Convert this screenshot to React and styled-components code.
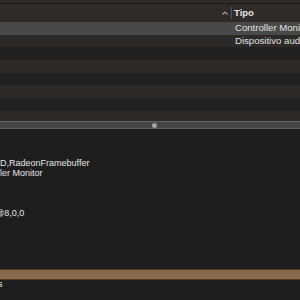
import React from "react";
import styled, { createGlobalStyle } from "styled-components";

const Global = createGlobalStyle`
  html, body { margin: 0; padding: 0; background: #1e1e1e; }
  #root { width: 300px; height: 300px; }
`;

const Window = styled.div`
  width: 300px;
  height: 300px;
  overflow: hidden;
  display: flex;
  flex-direction: column;
  background: #1e1e1e;
  font-family: "Liberation Sans", Arial, sans-serif;
  font-size: 9px;
  color: #d6d6d6;
`;

const TopStrip = styled.div`
  height: 3px;
  background: #2e2b29;
  border-bottom: 1px solid #191919;
  flex: none;
`;

const Header = styled.div`
  height: 18px;
  flex: none;
  display: grid;
  grid-template-columns: 1fr 69px;
  align-items: center;
  background: #2e2b29;
`;

const SortCell = styled.div`
  display: flex;
  justify-content: flex-end;
  align-items: center;
  padding-right: 3px;
`;

const HeaderCell = styled.div`
  position: relative;
  padding-left: 3px;
  font-weight: bold;
  font-size: 9.5px;
  color: #e4e4e4;
  line-height: 18px;
  &::before {
    content: "";
    position: absolute;
    left: 0;
    top: 3px;
    bottom: 3px;
    width: 1px;
    background: #575452;
  }
`;

const Rows = styled.div`
  height: 99px;
  flex: none;
  overflow: hidden;
`;

const Row = styled.div`
  height: 12.7px;
  display: grid;
  grid-template-columns: 1fr 65px;
  align-items: center;
  background: ${(p) => (p.$selected ? "#4a4949" : p.$alt ? "#232120" : "#2c2927")};
  white-space: nowrap;
  overflow: hidden;
`;

const Cell = styled.div`
  overflow: hidden;
  color: #e0e0e0;
  font-size: 9.6px;
  line-height: 12.7px;
`;

const Divider = styled.div`
  height: 6px;
  flex: none;
  background: #454545;
  border-top: 1px solid #626262;
  border-bottom: 1px solid #5a5a5a;
  display: flex;
  align-items: center;
  justify-content: center;
`;

const Grip = styled.div`
  width: 5px;
  height: 5px;
  border-radius: 50%;
  background: #a4a4a4;
  margin-left: 8px;
`;

const Detail = styled.div`
  flex: 1;
  background: #1e1e1e;
  padding-top: 29px;
  overflow: hidden;
`;

const Line = styled.div`
  height: 10.1px;
  line-height: 10.1px;
  white-space: nowrap;
  color: #e6e6e6;
  text-indent: ${(p) => p.$indent || 0}px;
`;

const Highlight = styled.div`
  height: 9px;
  margin: 0 0 -1px;
  position: relative;
  top: -0.3px;
  background: #8a6a4c;
  border-top: 1px solid #4f3b2a;
  border-bottom: 1px solid #4f3b2a;
`;

const Chevron = () => (
  <svg width="6" height="4" viewBox="0 0 6 4">
    <polyline points="0.5,3.5 3,1 5.5,3.5" fill="none" stroke="#a0a0a0" strokeWidth="1.1" />
  </svg>
);

const rows = [
  { t: "Controller Monitor", sel: true },
  { t: "Dispositivo audio" },
  { t: "" },
  { t: "" },
  { t: "" },
  { t: "" },
  { t: "" },
  { t: "" },
];

export default function App() {
  return (
    <Window>
      <Global />
      <TopStrip />
      <Header>
        <SortCell>
          <Chevron />
        </SortCell>
        <HeaderCell>Tipo</HeaderCell>
      </Header>
      <Rows>
        {rows.map((r, i) => (
          <Row key={i} $selected={r.sel} $alt={i % 2 === 0}>
            <Cell />
            <Cell>{r.t}</Cell>
          </Row>
        ))}
      </Rows>
      <Divider>
        <Grip />
      </Divider>
      <Detail>
        <Line>D,RadeonFramebuffer</Line>
        <Line>ler Monitor</Line>
        <Line />
        <Line />
        <Line />
        <Line $indent={-5}>@8,0,0</Line>
        <Line />
        <Line />
        <Line />
        <Line />
        <Line />
        <Highlight />
        <Line $indent={-2}>s</Line>
      </Detail>
    </Window>
  );
}
